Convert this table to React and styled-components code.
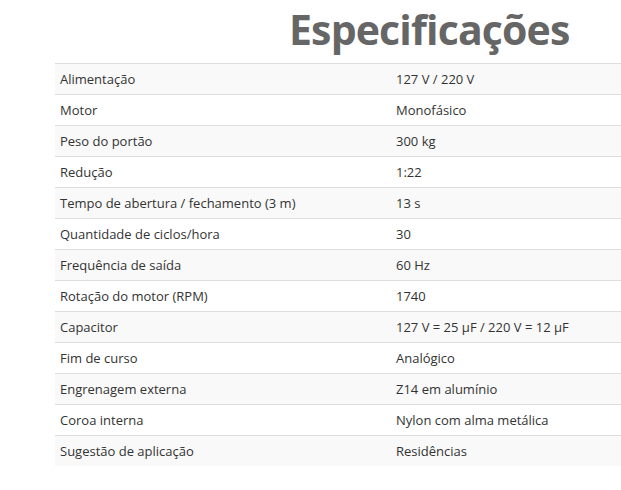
import styled, { createGlobalStyle } from "styled-components";

const GlobalStyle = createGlobalStyle`
  html, body {
    margin: 0;
    padding: 0;
    background: #ffffff;
    font-family: "Open Sans", "Liberation Sans", sans-serif;
  }
`;

const Page = styled.div`
  padding-left: 55px;
`;

const Title = styled.h2`
  margin: 0;
  padding-left: 234px;
  height: 63px;
  line-height: 58px;
  font-size: 41px;
  font-weight: 700;
  color: #666666;
  letter-spacing: -0.85px;
`;

const Table = styled.table`
  width: 566px;
  border-collapse: collapse;
  table-layout: fixed;
  font-size: 13px;
  color: #333333;
`;

const LabelCol = styled.col`
  width: 336px;
`;

const Row = styled.tr`
  background: ${(p) => (p.$striped ? "#f9f9f9" : "#ffffff")};
  border-top: 1px solid #dddddd;
`;

const Cell = styled.td`
  height: 30px;
  padding: 0 5px;
  vertical-align: middle;
  white-space: nowrap;
`;

const specs = [
  ["Alimentação", "127 V / 220 V"],
  ["Motor", "Monofásico"],
  ["Peso do portão", "300 kg"],
  ["Redução", "1:22"],
  ["Tempo de abertura / fechamento (3 m)", "13 s"],
  ["Quantidade de ciclos/hora", "30"],
  ["Frequência de saída", "60 Hz"],
  ["Rotação do motor (RPM)", "1740"],
  ["Capacitor", "127 V = 25 µF / 220 V = 12 µF"],
  ["Fim de curso", "Analógico"],
  ["Engrenagem externa", "Z14 em alumínio"],
  ["Coroa interna", "Nylon com alma metálica"],
  ["Sugestão de aplicação", "Residências"],
];

export default function App() {
  return (
    <Page>
      <GlobalStyle />
      <Title>Especificações</Title>
      <Table>
        <colgroup>
          <LabelCol />
          <col />
        </colgroup>
        <tbody>
          {specs.map(([label, value], i) => (
            <Row key={label} $striped={i % 2 === 0}>
              <Cell>{label}</Cell>
              <Cell>{value}</Cell>
            </Row>
          ))}
        </tbody>
      </Table>
    </Page>
  );
}
